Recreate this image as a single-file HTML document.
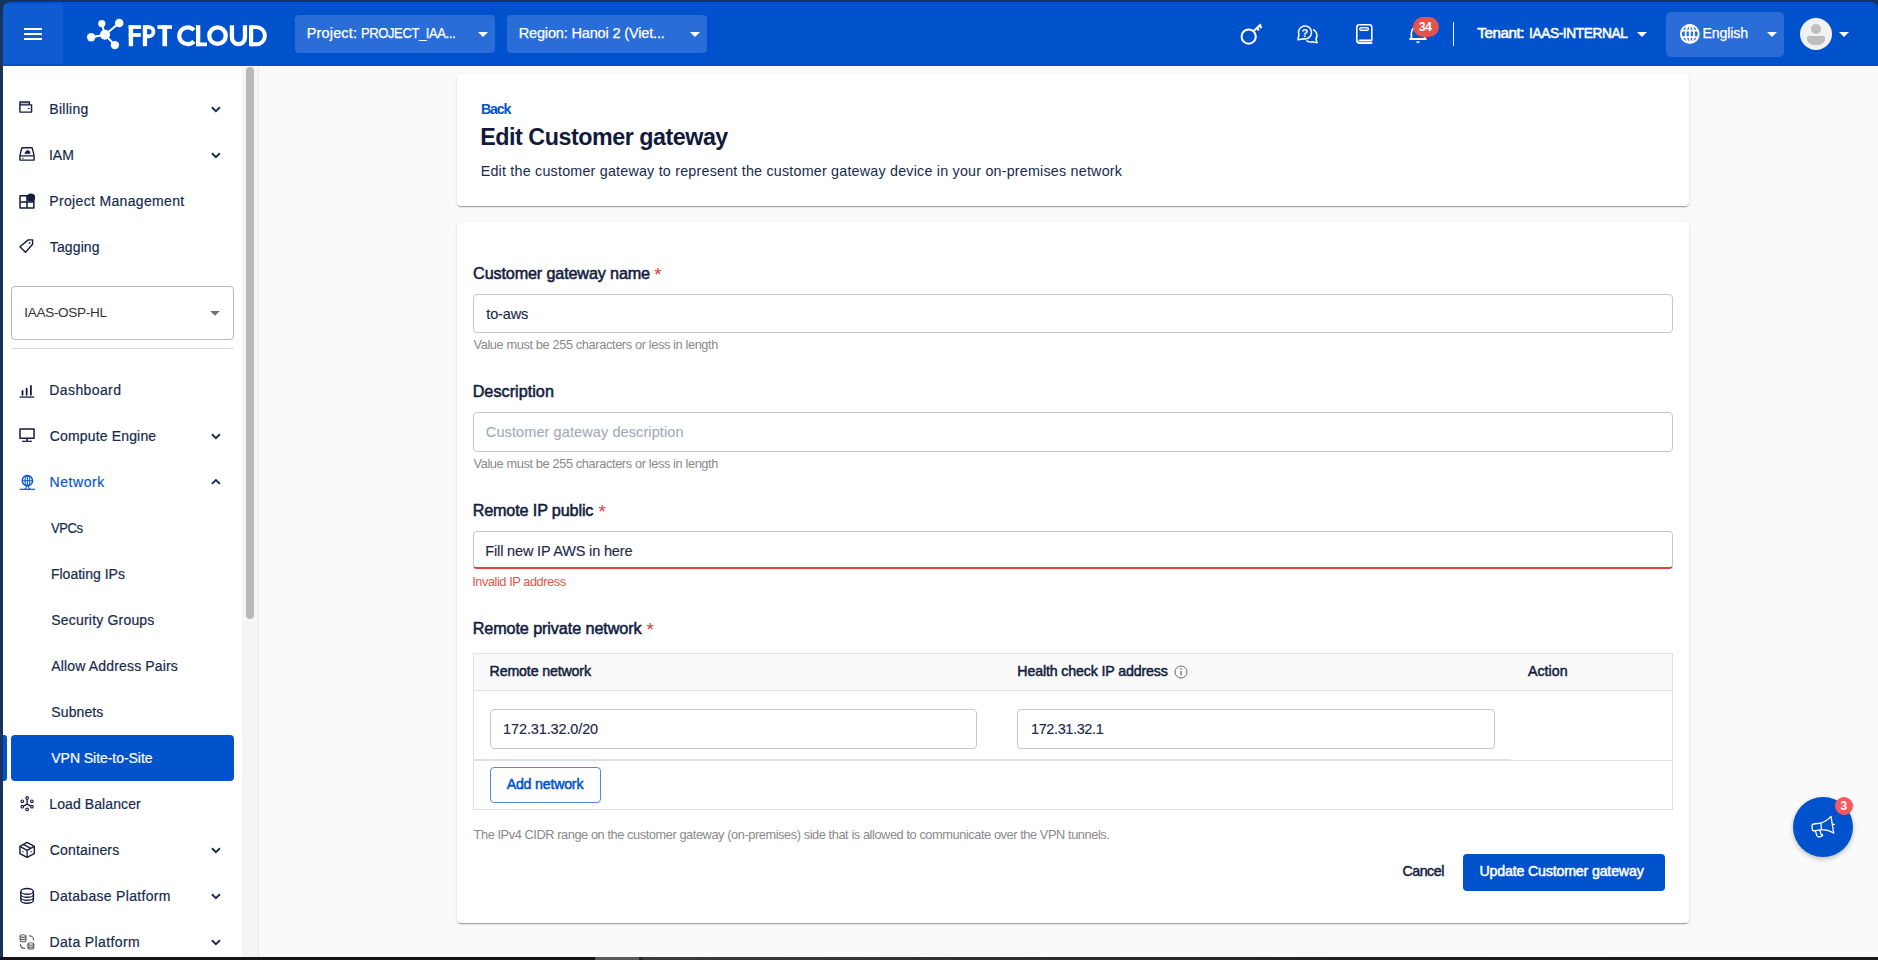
<!DOCTYPE html>
<html>
<head>
<meta charset="utf-8">
<title>Edit Customer gateway</title>
<style>
*{box-sizing:border-box;margin:0;padding:0}
html,body{width:1878px;height:960px;overflow:hidden}
body{position:relative;background:#17345e;font-family:"Liberation Sans",sans-serif;color:#172b4d}
.abs{position:absolute}
.t{position:absolute;white-space:nowrap;line-height:1}
#win{position:absolute;left:3px;top:2px;width:1875px;height:955px;background:linear-gradient(#0052cc 0,#0052cc 64px,#fafafa 64px);border-radius:8px 8px 0 0;overflow:hidden}
#botbar{position:absolute;left:0;top:957px;width:1878px;height:3px;background:linear-gradient(90deg,#141414 0,#141414 595px,#5a5a58 595px,#5a5a58 639px,#2a2a2a 639px,#2a2a2a 643px,#3c3c3a 643px,#2c2c2b 1100px,#1b1b1b 1500px,#1a1a1a 1878px)}
/* everything inside #page uses page coordinates */
#page{position:absolute;left:-3px;top:-2px;width:1878px;height:960px}
#hdr{position:absolute;left:0;top:0;width:1878px;height:66px;background:#0052cc}
#burger{position:absolute;left:3px;top:4px;width:60px;height:60px;background:#0f5bd0}
#burger i{position:absolute;left:21px;width:18px;height:2px;background:#fff}
.hsel{position:absolute;top:15px;height:38px;background:#2a6dd8;border-radius:4px}
.tri{position:absolute;width:0;height:0;border-left:5px solid transparent;border-right:5px solid transparent;border-top:5px solid #fff}
#side{position:absolute;left:3px;top:66px;width:239px;height:891px;background:#fff}
#strack{position:absolute;left:242px;top:67px;width:17px;height:890px;background:#f5f5f5;border-right:1px solid #e6e6e6}
#sthumb{position:absolute;left:246px;top:67px;width:8px;height:552px;background:#b9b9b9;border-radius:4px}
.nav{position:absolute;left:49px;white-space:nowrap;-webkit-text-stroke:0.2px currentColor;font-size:14px;line-height:20px;height:20px;color:#172b4d}
.nav.sub{left:51px}
.nav.net{color:#0a55cf}
.nav.act{color:#fff}
.card{position:absolute;left:457px;width:1232px;background:#fff;border-radius:4px;box-shadow:0 2px 1px -1px rgba(0,0,0,.2),0 1px 1px 0 rgba(0,0,0,.14),0 1px 3px 0 rgba(0,0,0,.12)}
.lbl{position:absolute;left:473px;white-space:nowrap;font-size:16.2px;font-weight:normal;-webkit-text-stroke:0.55px currentColor;line-height:20px;color:#131d3f}
.lbl b{color:#e5393b;font-weight:normal}
.inp{position:absolute;border:1px solid #c8c8c8;border-radius:4px;background:#fff}
.inp span{position:absolute;left:12px;top:0;line-height:37px;-webkit-text-stroke:0.15px currentColor;font-size:14.5px;white-space:nowrap;color:#1c2a4a}
.help{position:absolute;left:473px;white-space:nowrap;font-size:12.8px;line-height:14px;color:#8a8a8a}
</style>
</head>
<body>
<div id="win"><div id="page">

<!-- HEADER -->
<div id="hdr"></div>
<div id="burger"><i style="top:24px"></i><i style="top:29px"></i><i style="top:34px"></i></div>

<!-- logo -->
<svg class="abs" style="left:80px;top:10px" width="200" height="50" viewBox="80 10 200 50">
 <g stroke="#fff" stroke-width="2" stroke-linecap="round">
  <line x1="105" y1="34.7" x2="101.8" y2="23.6"/><line x1="105" y1="34.7" x2="119.2" y2="23"/>
  <line x1="105" y1="34.7" x2="91.2" y2="37.2"/><line x1="105" y1="34.7" x2="114.9" y2="45.1"/>
 </g>
 <g fill="#fff">
  <circle cx="105" cy="34.7" r="5"/><circle cx="101.8" cy="23.6" r="3.6"/><circle cx="119.2" cy="23" r="4.3"/>
  <circle cx="91.2" cy="37.2" r="4.2"/><circle cx="114.9" cy="45.1" r="4.2"/>
  <!-- F -->
  <rect x="128.7" y="25.2" width="4.4" height="21"/><rect x="128.7" y="25.2" width="12.4" height="3.7"/><rect x="128.7" y="33.1" width="12.1" height="3.8"/>
  <!-- P stem -->
  <rect x="142.8" y="25.2" width="4.3" height="21"/>
  <!-- T -->
  <rect x="157.5" y="25.2" width="14.5" height="3.7"/><rect x="162.4" y="25.2" width="4.7" height="21"/>
  <!-- L -->
  <rect x="196" y="25.2" width="4.3" height="21"/><rect x="196" y="42.5" width="11" height="3.7"/>
  <!-- D stem -->
  <rect x="249" y="25.2" width="4.2" height="21"/>
 </g>
 <g fill="none" stroke="#fff">
  <path d="M144 27.1H148.9A4.6 4.6 0 0 1 148.9 36.3H144" stroke-width="3.8"/>
  <path d="M193.9 30.1A8.4 8.4 0 1 0 193.9 41.3" stroke-width="4.2"/>
  <circle cx="217.5" cy="35.7" r="8.25" stroke-width="4.3"/>
  <path d="M231.95 25.2V37.6A6.5 6.5 0 0 0 244.95 37.6V25.2" stroke-width="4.3"/>
  <path d="M251 27.1H256.3A8.6 8.6 0 0 1 256.3 44.3H251" stroke-width="3.9"/>
 </g>
</svg>
<!-- header selects -->
<div class="hsel" style="left:295px;width:200px"></div>
<div class="t" id="hproj" style="-webkit-text-stroke:0.25px #fff;left:306.76px;top:26px;font-size:14.5px;letter-spacing:0.153px;color:#fff">Project:</div><div class="t" id="hproj2" style="-webkit-text-stroke:0.25px #fff;left:360.6px;top:26px;font-size:14.5px;letter-spacing:-0.467px;color:#fff;transform:scaleX(.9);transform-origin:0 0">PROJECT_IAA...</div>
<div class="tri" style="left:478px;top:32px"></div>
<div class="hsel" style="left:507px;width:200px"></div>
<div class="t" id="hreg" style="-webkit-text-stroke:0.25px #fff;left:518.68px;top:26px;font-size:14.5px;letter-spacing:-0.152px;color:#fff">Region: Hanoi 2 (Viet...</div>
<div class="tri" style="left:690px;top:32px"></div>
<!-- header icons -->
<svg class="abs" style="left:1230px;top:10px" width="230" height="50" viewBox="1230 10 230 50" fill="none" stroke="#fff" stroke-linecap="round" stroke-linejoin="round">
 <!-- key -->
 <circle cx="1248.7" cy="36.6" r="7.1" stroke-width="2.1"/>
 <path d="M1253.9 30.8L1261 24.2M1259.6 25.6L1261.6 28M1257.3 28L1258.8 30.6" stroke-width="2" stroke-linecap="butt"/>
 <!-- help bubbles -->
 <path d="M1298.9 34.6A6.5 6.5 0 1 1 1303.87 38.8L1298 39.7Z" stroke-width="1.5"/>
 <path d="M1313.55 29.76A6.5 6.5 0 0 1 1315.9 39.1L1317.2 42.7L1312.2 41.77A6.5 6.5 0 0 1 1306.8 40.9" stroke-width="1.5"/>
 <!-- book -->
 <path d="M1371.8 43.1H1359.6A2.8 2.8 0 0 1 1356.8 40.3V27.3A2.5 2.5 0 0 1 1359.3 24.8H1369.3A2.5 2.5 0 0 1 1371.8 27.3V40.3H1359.6" stroke-width="1.6"/>
 <rect x="1357.5" y="40.6" width="14.5" height="2.4" fill="#fff" fill-opacity=".45" stroke="none"/>
 <rect x="1359.8" y="27.5" width="8.6" height="3" rx="1.2" stroke-width="1.2" fill="#fff" fill-opacity=".45"/>
 <!-- bell -->
 <path d="M1411.4 38.6V33A6.6 6.6 0 0 1 1424.6 33V38.6" stroke-width="1.7"/>
 <path d="M1409.4 39H1426.6" stroke-width="1.8" stroke-linecap="butt"/>
 <path d="M1415.9 41.4A2.2 2.2 0 0 0 1420.1 41.4Z" fill="#fff" stroke="none"/>
</svg>
<div class="t" id="hq" style="left:1301.6px;top:27.6px;font-size:11px;font-weight:bold;color:#fff">?</div>
<div class="abs" style="left:1413px;top:17px;width:26px;height:20px;border-radius:10px;background:#e5534b"></div>
<div class="t" id="hbadge" style="left:1418.81px;top:21px;font-size:12.5px;font-weight:bold;color:#fff;letter-spacing:-0.83px">34</div>
<!-- header right -->
<div class="abs" style="left:1453px;top:22px;width:1px;height:24px;background:#fff"></div>
<div class="t" id="hten" style="left:1477.24px;top:25px;font-size:15.2px;-webkit-text-stroke:0.55px #fff;letter-spacing:-0.433px;color:#fff">Tenant:</div><div class="t" id="hten2" style="left:1528.89px;top:25px;font-size:15.2px;-webkit-text-stroke:0.55px #fff;letter-spacing:-0.422px;color:#fff;transform:scaleX(.9);transform-origin:0 0">IAAS-INTERNAL</div>
<div class="tri" style="left:1637px;top:32px"></div>
<div class="abs" style="left:1666px;top:12px;width:118px;height:45px;background:#2a6dd8;border-radius:5px"></div>
<!-- globe -->
<svg class="abs" style="left:1678px;top:22px" width="24" height="24" viewBox="1678 22 24 24" fill="none" stroke="#fff" stroke-width="2">
 <circle cx="1689.8" cy="33.9" r="8.9"/>
 <ellipse cx="1689.8" cy="33.9" rx="4.2" ry="8.9" stroke-width="1.9"/>
 <path d="M1689.8 24.9V42.9M1681.6 30.6H1698M1681.6 37.1H1698" stroke-width="1.9"/>
</svg>
<div class="t" id="heng" style="-webkit-text-stroke:0.25px #fff;left:1702.41px;top:26px;font-size:14.2px;letter-spacing:-0.139px;color:#fff">English</div>
<div class="tri" style="left:1767px;top:32px"></div>
<div class="abs" style="left:1800px;top:18px;width:32px;height:32px;border-radius:16px;background:#f1f1f1;overflow:hidden">
 <div class="abs" style="left:11px;top:6px;width:10px;height:10px;border-radius:5px;background:#bdbdbd"></div>
 <div class="abs" style="left:7px;top:18px;width:18px;height:9px;border-radius:3px 3px 9px 9px;background:#bdbdbd"></div>
</div>
<div class="tri" style="left:1839px;top:32px"></div>

<!-- SIDEBAR -->
<div id="side"></div>
<div id="strack"></div>
<div id="sthumb"></div>

<!-- sidebar items -->
<div class="abs" style="left:11px;top:735px;width:223px;height:46px;background:#0052cc;border-radius:4px"></div>
<div class="abs" style="left:3px;top:735px;width:4px;height:46px;background:#0052cc;border-radius:0 3px 3px 0"></div>
<div class="abs" style="left:11px;top:286px;width:223px;height:54px;border:1px solid #b8b8b8;border-radius:4px;background:#fff"></div>
<div class="t" id="nsel" style="left:24.26px;top:306px;font-size:13.6px;color:#333;letter-spacing:-0.336px">IAAS-OSP-HL</div>
<svg class="abs" style="left:208px;top:309px" width="14" height="9" viewBox="208 309 14 9"><path d="M210.2 311H219.8L215 315.8Z" fill="#707070"/></svg>
<div class="abs" style="left:11px;top:348px;width:223px;height:1px;background:#dcdde4"></div>
<div class="nav " id="n1" style="top:99px;letter-spacing:0.266px;left:49.32px">Billing</div>
<div class="nav " id="n2" style="top:145px;letter-spacing:-0.055px;left:49.04px">IAM</div>
<div class="nav " id="n3" style="top:191px;letter-spacing:0.333px;left:49.32px">Project Management</div>
<div class="nav " id="n4" style="top:237px;letter-spacing:0.102px;left:49.86px">Tagging</div>
<div class="nav " id="n5" style="top:380px;letter-spacing:0.391px;left:49.32px">Dashboard</div>
<div class="nav " id="n6" style="top:426px;letter-spacing:0.16px;left:49.75px">Compute Engine</div>
<div class="nav net" id="n7" style="top:472px;letter-spacing:0.585px;left:49.46px">Network</div>
<div class="nav sub" id="n8" style="top:518px;letter-spacing:-0.492px;left:51.04px;transform:scaleX(.93);transform-origin:0 0">VPCs</div>
<div class="nav sub" id="n9" style="top:564px;letter-spacing:0.003px;left:50.93px">Floating IPs</div>
<div class="nav sub" id="n10" style="top:610px;letter-spacing:0.186px;left:51.35px">Security Groups</div>
<div class="nav sub" id="n11" style="top:656px;letter-spacing:0.156px;left:51.35px">Allow Address Pairs</div>
<div class="nav sub" id="n12" style="top:702px;letter-spacing:0.095px;left:51.35px">Subnets</div>
<div class="nav sub act" id="n13" style="top:748px;letter-spacing:-0.048px;left:51.32px">VPN Site-to-Site</div>
<div class="nav " id="n14" style="top:794px;letter-spacing:0.091px;left:49.3px">Load Balancer</div>
<div class="nav " id="n15" style="top:840px;letter-spacing:0.196px;left:49.75px">Containers</div>
<div class="nav " id="n16" style="top:886px;letter-spacing:0.315px;left:49.46px">Database Platform</div>
<div class="nav " id="n17" style="top:932px;letter-spacing:0.386px;left:49.46px">Data Platform</div>
<svg class="abs" style="left:0;top:66px" width="242" height="894" viewBox="0 66 242 894" fill="none" stroke="#172b4d" stroke-width="1.9"><path d="M211.9 107.2L215.9 111.1L219.9 107.2"/><path d="M211.9 153.2L215.9 157.1L219.9 153.2"/><path d="M211.9 434.2L215.9 438.1L219.9 434.2"/><path d="M211.9 483.9L215.9 480L219.9 483.9"/><path d="M211.9 848.2L215.9 852.1L219.9 848.2"/><path d="M211.9 894.2L215.9 898.1L219.9 894.2"/><path d="M211.9 940.2L215.9 944.1L219.9 940.2"/></svg>
<!-- sidebar icons -->
<svg class="abs" style="left:0;top:66px" width="60" height="894" viewBox="0 66 60 894" fill="none" stroke="#151c3e" stroke-width="1.4" stroke-linejoin="round">
 <!-- billing -->
 <rect x="19.9" y="104.9" width="11.7" height="7.2"/>
 <path d="M19.9 104.9V102H29.4V104.9"/><rect x="20" y="102.6" width="9.3" height="2" fill="#151c3e" fill-opacity=".3" stroke="none"/>
 <rect x="27.9" y="108" width="1.8" height="1" fill="#151c3e" stroke="none"/>
 <!-- iam -->
 <path d="M19.9 155.8L21.6 148.6Q21.8 147.7 22.8 147.7H31.2Q32.2 147.7 32.4 148.6L34.1 155.8V160.1H19.9Z"/>
 <path d="M19.9 155.9H34.1" stroke-width="1.2"/>
 <path d="M25 153.6Q24.4 152.2 26 151.8Q26.4 150.2 28 150.5Q29.6 150.6 29.5 152Q30.6 152.4 30 153.6Z" fill="#151c3e" stroke-width=".6"/>
 <rect x="22.2" y="157.7" width="1.4" height="1" fill="#151c3e" stroke="none"/>
 <!-- project mgmt -->
 <rect x="20.05" y="195.75" width="13.8" height="12.25" stroke-width="1.5"/>
 <path d="M27 195.75V208M20.05 201.9H33.85" stroke-width="1.5"/>
 <circle cx="31" cy="197.7" r="4.1" fill="#151c3e" stroke="none"/>
 <!-- tag -->
 <path d="M19.9 246.8L28.2 239.9H32.6V244.3L25.5 252.3Z"/>
 <circle cx="29.5" cy="242.9" r=".9" fill="#151c3e" stroke="none"/>
 <!-- dashboard -->
 <path d="M19.6 397.1H34.2" stroke-width="1.3"/>
 <path d="M22.5 390.9V394.8M26.65 388.7V394.8M30.9 385.9V394.8" stroke-width="1.8" stroke-linecap="round"/>
 <!-- monitor -->
 <rect x="19.95" y="429.05" width="14.1" height="9.2" stroke-width="1.5"/>
 <path d="M27.05 438.5V441" stroke-width="1.6"/><path d="M22 441.3H32" stroke-width="1.2"/>
 <!-- network -->
 <g stroke="#0a55cf">
  <circle cx="27.4" cy="480.7" r="5.15" stroke-width="1.5"/>
  <ellipse cx="27.4" cy="480.7" rx="2.4" ry="5.15" stroke-width="1.1"/>
  <path d="M27.4 475.5V485.9M22.2 480.7H32.6" stroke-width="1.1"/>
  <path d="M19.6 489.3H35" stroke-width="1.2"/>
  <path d="M26.4 486Q26.3 488.8 24.4 489.3M28.4 486Q28.5 488.8 30.4 489.3" stroke-width="1.1"/>
 </g>
 <!-- load balancer -->
 <g stroke-width="1.1">
  <circle cx="27.1" cy="797.9" r="1.3"/><circle cx="22.25" cy="801.3" r="1.3"/><circle cx="31.9" cy="801.3" r="1.3"/>
  <circle cx="22.25" cy="806.7" r="1.3"/><circle cx="31.9" cy="806.7" r="1.3"/><circle cx="27.1" cy="809.4" r="1.3"/>
  <path d="M27.1 799.2V804.2L23.4 806.1M27.1 804.2L30.8 806.1" stroke-width="1.3"/>
 </g>
 <!-- containers -->
 <path d="M27.1 842.4L34.3 846.4V853.7L27.1 857.3L19.9 853.7V846.4Z"/>
 <path d="M19.9 846.4L27.1 850.4L34.3 846.4M27.1 850.4V857.3M23.4 844.4L30.8 848.4" stroke-width="1.3"/>
 <rect x="22.2" y="851.2" width="1.4" height="1" fill="#151c3e" stroke="none"/><rect x="30.4" y="851.2" width="1.4" height="1" fill="#151c3e" stroke="none"/>
 <!-- database -->
 <ellipse cx="27.1" cy="891.4" rx="6.3" ry="2.9"/>
 <path d="M20.8 891.4V900.3A6.3 2.9 0 0 0 33.4 900.3V891.4M20.8 894.4A6.3 2.9 0 0 0 33.4 894.4M20.8 897.4A6.3 2.9 0 0 0 33.4 897.4"/>
 <!-- data platform -->
 <g stroke="#5f5f5f" stroke-width="1.1">
  <ellipse cx="23.05" cy="936.1" rx="2.9" ry="1.3"/>
  <path d="M20.15 936.1V940.5A2.9 1.3 0 0 0 25.95 940.5V936.1M20.15 938.3A2.9 1.3 0 0 0 25.95 938.3"/>
  <ellipse cx="30.85" cy="944" rx="2.9" ry="1.3"/>
  <path d="M27.95 944V947.7A2.9 1.3 0 0 0 33.75 947.7V944M27.95 945.9A2.9 1.3 0 0 0 33.75 945.9"/>
  <path d="M29.6 935.9A4 4 0 0 1 33.6 939.9M20.5 944.6A4 4 0 0 0 24.5 948.4" stroke-width="1.2" stroke-linecap="round"/>
 </g>
</svg>

<!-- MAIN -->
<div class="card" id="card1" style="top:74px;height:132px"></div>
<div class="card" id="card2" style="top:222px;height:701px"></div>

<!-- card1 text -->
<div class="t" id="m1" style="left:480.98px;top:102px;font-size:14.2px;font-weight:bold;color:#0052cc;letter-spacing:-1.206px">Back</div>
<div class="t" id="m2" style="left:480.31px;top:126px;font-size:23.3px;font-weight:bold;color:#111a3a;letter-spacing:-0.48px">Edit Customer gateway</div>
<div class="t" id="m3" style="left:480.7px;top:164px;font-size:14.3px;color:#172b4d;letter-spacing:0.213px">Edit the customer gateway to represent the customer gateway device in your on-premises network</div>
<!-- form -->
<div class="lbl" id="l1" style="top:263px;letter-spacing:-0.148px;left:473.11px">Customer gateway name</div><div class="t" id="a1" style="left:654.2px;top:264.6px;font-size:19px;color:#e5393b;letter-spacing:-1.2px">*</div>
<div class="inp" style="left:473px;top:294px;width:1200px;height:39px"><span id="i1" style="letter-spacing:-0.164px;left:12.3px;top:1px">to-aws</span></div>
<div class="help" id="h1" style="top:338px;letter-spacing:-0.385px;left:473.48px">Value must be 255 characters or less in length</div>
<div class="lbl" id="l2" style="top:381px;letter-spacing:0.03px;left:472.64px">Description</div>
<div class="inp" style="left:473px;top:412px;width:1200px;height:40px"><span id="i2" style="color:#a6abb9;letter-spacing:0.097px;left:11.86px;top:1px">Customer gateway description</span></div>
<div class="help" id="h2" style="top:457px;letter-spacing:-0.385px;left:473.48px">Value must be 255 characters or less in length</div>
<div class="lbl" id="l3" style="top:500px;letter-spacing:-0.145px;left:472.64px">Remote IP public</div><div class="t" id="a3" style="left:598.4px;top:501.6px;font-size:19px;color:#e5393b;letter-spacing:-1.4px">*</div>
<div class="inp" style="left:473px;top:531px;width:1200px;height:38px;border-bottom:2px solid #e53e3e"><span id="i3" style="letter-spacing:-0.162px;left:11.35px;top:1px">Fill new IP AWS in here</span></div>
<div class="help" id="h3" style="top:575px;color:#e5534b;letter-spacing:-0.445px;left:472.16px">Invalid IP address</div>
<div class="lbl" id="l4" style="top:618px;letter-spacing:-0.093px;left:472.64px">Remote private network</div><div class="t" id="a4" style="left:646.4px;top:619.6px;font-size:19px;color:#e5393b;letter-spacing:-0.2px">*</div>
<!-- table -->
<div class="abs" style="left:473px;top:653px;width:1200px;height:157px;border:1px solid #e0e0e0;background:#fff"></div>
<div class="abs" style="left:474px;top:654px;width:1198px;height:36px;background:#fafafa"></div>
<div class="abs" style="left:474px;top:690px;width:1198px;height:1px;background:#e0e0e0"></div>
<div class="abs" style="left:474px;top:759px;width:1037px;height:2px;background:#e0e0e0"></div>
<div class="abs" style="left:1511px;top:760px;width:161px;height:1px;background:#e0e0e0"></div>
<div class="t m" id="t1" style="left:489.61px;top:664px;font-size:14.2px;font-weight:normal;-webkit-text-stroke:0.5px currentColor;color:#131d3f;letter-spacing:-0.148px">Remote network</div>
<div class="t m" id="t2" style="left:1017.33px;top:664px;font-size:14.2px;font-weight:normal;-webkit-text-stroke:0.5px currentColor;color:#131d3f;letter-spacing:-0.137px">Health check IP address</div>
<div class="t m" id="t3" style="left:1528.0px;top:664px;font-size:14.2px;font-weight:normal;-webkit-text-stroke:0.5px currentColor;color:#131d3f;letter-spacing:0.034px">Action</div>
<svg class="abs" style="left:1173px;top:664px" width="16" height="16" viewBox="1173 664 16 16" fill="none" stroke="#6b6b6b" stroke-width="1"><circle cx="1181" cy="672" r="6"/><path d="M1181 671V675.2" stroke-width="1.3"/><circle cx="1181" cy="668.9" r=".8" fill="#6b6b6b" stroke="none"/></svg>
<div class="inp" style="left:490px;top:709px;width:487px;height:40px"><span id="i4" style="line-height:38px;letter-spacing:-0.131px;left:12.09px;top:0px">172.31.32.0/20</span></div>
<div class="inp" style="left:1017px;top:709px;width:478px;height:40px"><span id="i5" style="line-height:38px;letter-spacing:-0.383px;left:12.96px;top:0px">172.31.32.1</span></div>
<div class="abs" style="left:490px;top:767px;width:111px;height:36px;border:1px solid #4c8be0;border-radius:4px;background:#fff"></div>
<div class="t m" id="b1" style="left:506.63px;top:777px;font-size:14.2px;font-weight:normal;-webkit-text-stroke:0.5px currentColor;color:#0052cc;letter-spacing:-0.201px">Add network</div>
<div class="help" id="h4" style="top:828px;letter-spacing:-0.427px;left:473.59px">The IPv4 CIDR range on the customer gateway (on-premises) side that is allowed to communicate over the VPN tunnels.</div>
<div class="t m" id="b2" style="left:1402.46px;top:864px;font-size:14.2px;font-weight:normal;-webkit-text-stroke:0.5px currentColor;color:#131d3f;letter-spacing:-0.458px">Cancel</div>
<div class="abs" style="left:1463px;top:854px;width:202px;height:37px;background:#0052cc;border-radius:4px"></div>
<div class="t m" id="b3" style="left:1479.46px;top:864px;font-size:14.2px;font-weight:normal;-webkit-text-stroke:0.5px currentColor;color:#fff;letter-spacing:-0.167px">Update Customer gateway</div>
<!-- fab -->
<div class="abs" style="left:1793px;top:797px;width:60px;height:60px;border-radius:30px;background:#0052cc;box-shadow:0 2px 5px rgba(0,0,0,.25)"></div>
<svg class="abs" style="left:1805px;top:810px" width="36" height="34" viewBox="1805 810 36 34" fill="none" stroke="#fff" stroke-width="1.3" stroke-linejoin="round" stroke-linecap="round">
 <path d="M1820.9 823.1L1813.6 824Q1811.9 824.3 1812 826L1812.3 829.3Q1812.5 831 1814.2 830.9L1821.5 829.6"/>
 <path d="M1820.9 823.1Q1826.5 821.5 1831 816.4L1833.7 833Q1828 829.6 1821.5 829.6Z"/>
 <path d="M1815.4 831L1816.9 835.6Q1817.5 837.3 1819.3 836.9L1821.6 836.3Q1823 835.8 1822.5 834.6L1821.3 834.9L1819.9 830.3"/>
 <path d="M1832.7 824.3H1834.4"/>
</svg>
<div class="abs" style="left:1835px;top:797px;width:18px;height:18px;border-radius:9px;background:#f9575f"></div>
<div class="t m" id="fb" style="left:1840.5px;top:800px;font-size:12px;font-weight:bold;color:#fff">3</div>

</div></div>
<div id="botbar"></div>
</body>
</html>
